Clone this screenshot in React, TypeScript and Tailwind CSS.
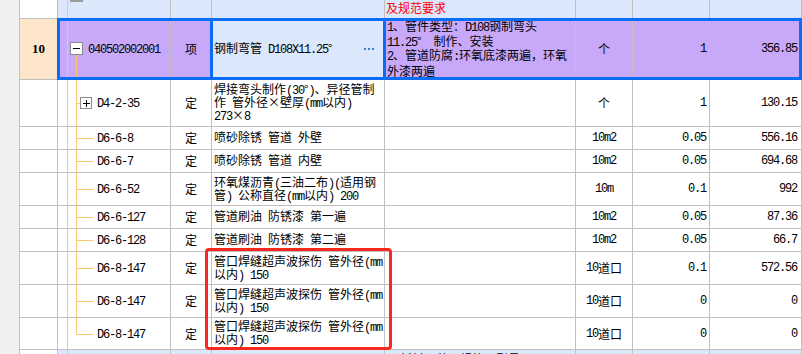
import React from 'react';

const COLS = 'grid shrink-0 grid-cols-[38px_113px_41px_173px_191px_57px_77px_92px]';
const CELL = 'relative flex items-center border-r border-b border-[#c0c0c0] overflow-hidden';
const BLUE = 'bg-[#dbe7fb]';
const PURPLE = 'bg-[#c8a9f9]';

// splits text so ascii runs get the half-width mono face
function Txt({ s }: { s: string }) {
  const parts = s.match(/[\x20-\x7e]+|[^\x20-\x7e]+/g) ?? [];
  return (
    <>
      {parts.map((p, i) =>
        /^[\x20-\x7e]+$/.test(p) ? (
          <span key={i} className="font-['Liberation_Mono',monospace] text-[12px] tracking-[-1.2px]">
            {p}
          </span>
        ) : (
          <span key={i}>{p}</span>
        )
      )}
    </>
  );
}

function Lines({ lines, big }: { lines: string[]; big?: boolean }) {
  const line = big ? 'h-[14.5px] leading-[14.5px]' : 'h-[13px] leading-[13px]';
  return (
    <div className="flex flex-col">
      {lines.map((l, i) => (
        <div key={i} className={`${line} flex items-center whitespace-pre`}>
          <span>
            <Txt s={l} />
          </span>
        </div>
      ))}
    </div>
  );
}

type Tree = 'top' | 'parent' | 'child' | 'plus' | 'last' | 'bottom';

function CodeCell({ tree, code, bg = '' }: { tree: Tree; code?: string; bg?: string }) {
  const pad = tree === 'parent' ? 'pl-[30px]' : 'pl-[39px]';
  return (
    <div className={`${CELL} ${bg} ${pad}`}>
      <span className="absolute left-[9px] top-0 bottom-0 w-px bg-[#fbc66f]" />
      {tree === 'top' && <span className="absolute left-[12px] top-0 w-[13px] h-[2px] bg-[#9d9d9d]" />}
      {tree === 'parent' && (
        <>
          <span className="absolute left-[18px] top-[36px] bottom-0 w-px bg-[#fbc66f]" />
          <span className="absolute left-[12px] top-[23px] w-[13px] h-[13px] border border-[#8a8a8a] bg-white flex items-center justify-center">
            <span className="w-[7px] h-px bg-black" />
          </span>
        </>
      )}
      {(tree === 'child' || tree === 'plus') && (
        <span className="absolute left-[18px] top-0 bottom-0 w-px bg-[#fbc66f]" />
      )}
      {tree === 'last' && <span className="absolute left-[18px] top-0 h-1/2 w-px bg-[#fbc66f]" />}
      {(tree === 'child' || tree === 'last') && (
        <span className="absolute left-[18px] top-1/2 w-[17px] h-px bg-[#fbc66f]" />
      )}
      {tree === 'plus' && (
        <>
          <span className="absolute left-[18px] top-1/2 w-[4px] h-px bg-[#fbc66f]" />
          <span className="absolute left-[22px] top-1/2 -translate-y-1/2 w-[12px] h-[12px] border border-[#8a8a8a] bg-white flex items-center justify-center">
            <span className="absolute w-[7px] h-px bg-black" />
            <span className="absolute w-px h-[7px] bg-black" />
          </span>
        </>
      )}
      {code && (
        <span className="whitespace-pre">
          <Txt s={code} />
        </span>
      )}
    </div>
  );
}

interface Item {
  code: string;
  tree: Tree;
  name: string[];
  unit: string;
  qty: string;
  price: string;
  h: string;
}

const items: Item[] = [
  {
    code: 'D4-2-35',
    tree: 'plus',
    name: ['焊接弯头制作(30°)、异径管制', '作 管外径×壁厚(mm以内)', '273×8'],
    unit: '个',
    qty: '1',
    price: '130.15',
    h: 'h-[47px]',
  },
  { code: 'D6-6-8', tree: 'child', name: ['喷砂除锈 管道 外壁'], unit: '10m2', qty: '0.05', price: '556.16', h: 'h-[23px]' },
  { code: 'D6-6-7', tree: 'child', name: ['喷砂除锈 管道 内壁'], unit: '10m2', qty: '0.05', price: '694.68', h: 'h-[23px]' },
  {
    code: 'D6-6-52',
    tree: 'child',
    name: ['环氧煤沥青(三油二布)(适用钢', '管) 公称直径(mm以内) 200'],
    unit: '10m',
    qty: '0.1',
    price: '992',
    h: 'h-[33px]',
  },
  { code: 'D6-6-127', tree: 'child', name: ['管道刷油 防锈漆 第一遍'], unit: '10m2', qty: '0.05', price: '87.36', h: 'h-[23px]' },
  { code: 'D6-6-128', tree: 'child', name: ['管道刷油 防锈漆 第二遍'], unit: '10m2', qty: '0.05', price: '66.7', h: 'h-[23px]' },
  {
    code: 'D6-8-147',
    tree: 'child',
    name: ['管口焊缝超声波探伤 管外径(mm', '以内) 150'],
    unit: '10道口',
    qty: '0.1',
    price: '572.56',
    h: 'h-[33px]',
  },
  {
    code: 'D6-8-147',
    tree: 'child',
    name: ['管口焊缝超声波探伤 管外径(mm', '以内) 150'],
    unit: '10道口',
    qty: '0',
    price: '0',
    h: 'h-[33px]',
  },
  {
    code: 'D6-8-147',
    tree: 'last',
    name: ['管口焊缝超声波探伤 管外径(mm', '以内) 150'],
    unit: '10道口',
    qty: '0',
    price: '0',
    h: 'h-[32px]',
  },
];

export default function App() {
  return (
    <div className="relative w-[802px] h-[354px] overflow-hidden bg-white flex font-['Noto_Sans_CJK_SC',sans-serif] text-[12px] text-black">
      <div className="w-[20px] shrink-0 bg-[#f0f0f0] border-r border-[#c0c0c0]" />
      <div className="flex-1 flex flex-col">
        {/* previous item, mostly scrolled away */}
        <div className={`${COLS} h-[19px]`}>
          <div className={`${CELL} bg-white`} />
          <CodeCell tree="top" bg={BLUE} />
          <div className={`${CELL} ${BLUE}`} />
          <div className={`${CELL} ${BLUE}`} />
          <div className={`${CELL} ${BLUE} items-start pl-[1px] pt-px text-[#ff0000] leading-[13px]`}>及规范要求</div>
          <div className={`${CELL} ${BLUE}`} />
          <div className={`${CELL} ${BLUE}`} />
          <div className={`${CELL} ${BLUE}`} />
        </div>

        {/* selected item */}
        <div className={`${COLS} h-[61px] relative`}>
          <div className={`${CELL} bg-[#fde6c9] justify-center font-['Liberation_Serif',serif] font-bold text-[13px]`}>10</div>
          <CodeCell tree="parent" code="040502002001" bg={PURPLE} />
          <div className={`${CELL} ${PURPLE} justify-center`}>项</div>
          <div className={`${CELL} ${BLUE} pl-[2px] justify-between pr-[10px]`}>
            <span className="whitespace-pre">
              <Txt s="钢制弯管 D108X11.25°" />
            </span>
            <span className="flex gap-[2px]">
              <span className="w-[2px] h-[2px] bg-[#3c7ad4]" />
              <span className="w-[2px] h-[2px] bg-[#3c7ad4]" />
              <span className="w-[2px] h-[2px] bg-[#3c7ad4]" />
            </span>
          </div>
          <div className={`${CELL} ${PURPLE} pl-[2px]`}>
            <Lines
              big
              lines={['1、管件类型：D108钢制弯头', '11.25°  制作、安装', '2、管道防腐:环氧底漆两遍，环氧', '外漆两遍']}
            />
          </div>
          <div className={`${CELL} ${PURPLE} justify-center`}>个</div>
          <div className={`${CELL} ${PURPLE} justify-end pr-[3px]`}>
            <Txt s="1" />
          </div>
          <div className={`${CELL} ${PURPLE} justify-end pr-[4px]`}>
            <Txt s="356.85" />
          </div>
          <div className="absolute left-[37px] right-0 -top-px bottom-0 border-[3px] border-[#0b6cf6] pointer-events-none" />
          <div className="absolute left-[190px] w-[176px] -top-px bottom-0 border-[3px] border-[#0b6cf6] pointer-events-none" />
        </div>

        {items.map((it, i) => (
          <div key={i} className={`${COLS} ${it.h}`}>
            <div className={`${CELL} bg-white`} />
            <CodeCell tree={it.tree} code={it.code} />
            <div className={`${CELL} justify-center`}>定</div>
            <div className={`${CELL} pl-[2px]`}>
              <Lines lines={it.name} />
            </div>
            <div className={CELL} />
            <div className={`${CELL} justify-center`}>
              <Txt s={it.unit} />
            </div>
            <div className={`${CELL} justify-end pr-[3px]`}>
              <Txt s={it.qty} />
            </div>
            <div className={`${CELL} justify-end pr-[4px]`}>
              <Txt s={it.price} />
            </div>
          </div>
        ))}

        {/* next item, cut off by the window */}
        <div className={`${COLS} h-[20px]`}>
          <div className={`${CELL} bg-white`} />
          <CodeCell tree="bottom" bg={BLUE} />
          <div className={`${CELL} ${BLUE}`} />
          <div className={`${CELL} ${BLUE}`} />
          <div className={`${CELL} ${BLUE} items-start pl-[15px] pt-[2px] leading-[13px]`}>材料品种、规格、型号</div>
          <div className={`${CELL} ${BLUE}`} />
          <div className={`${CELL} ${BLUE}`} />
          <div className={`${CELL} ${BLUE}`} />
        </div>
      </div>

      <div className="absolute left-[205px] top-[248px] w-[187px] h-[102px] border-[3px] border-[#f8281c] rounded-[4px] pointer-events-none" />
    </div>
  );
}
